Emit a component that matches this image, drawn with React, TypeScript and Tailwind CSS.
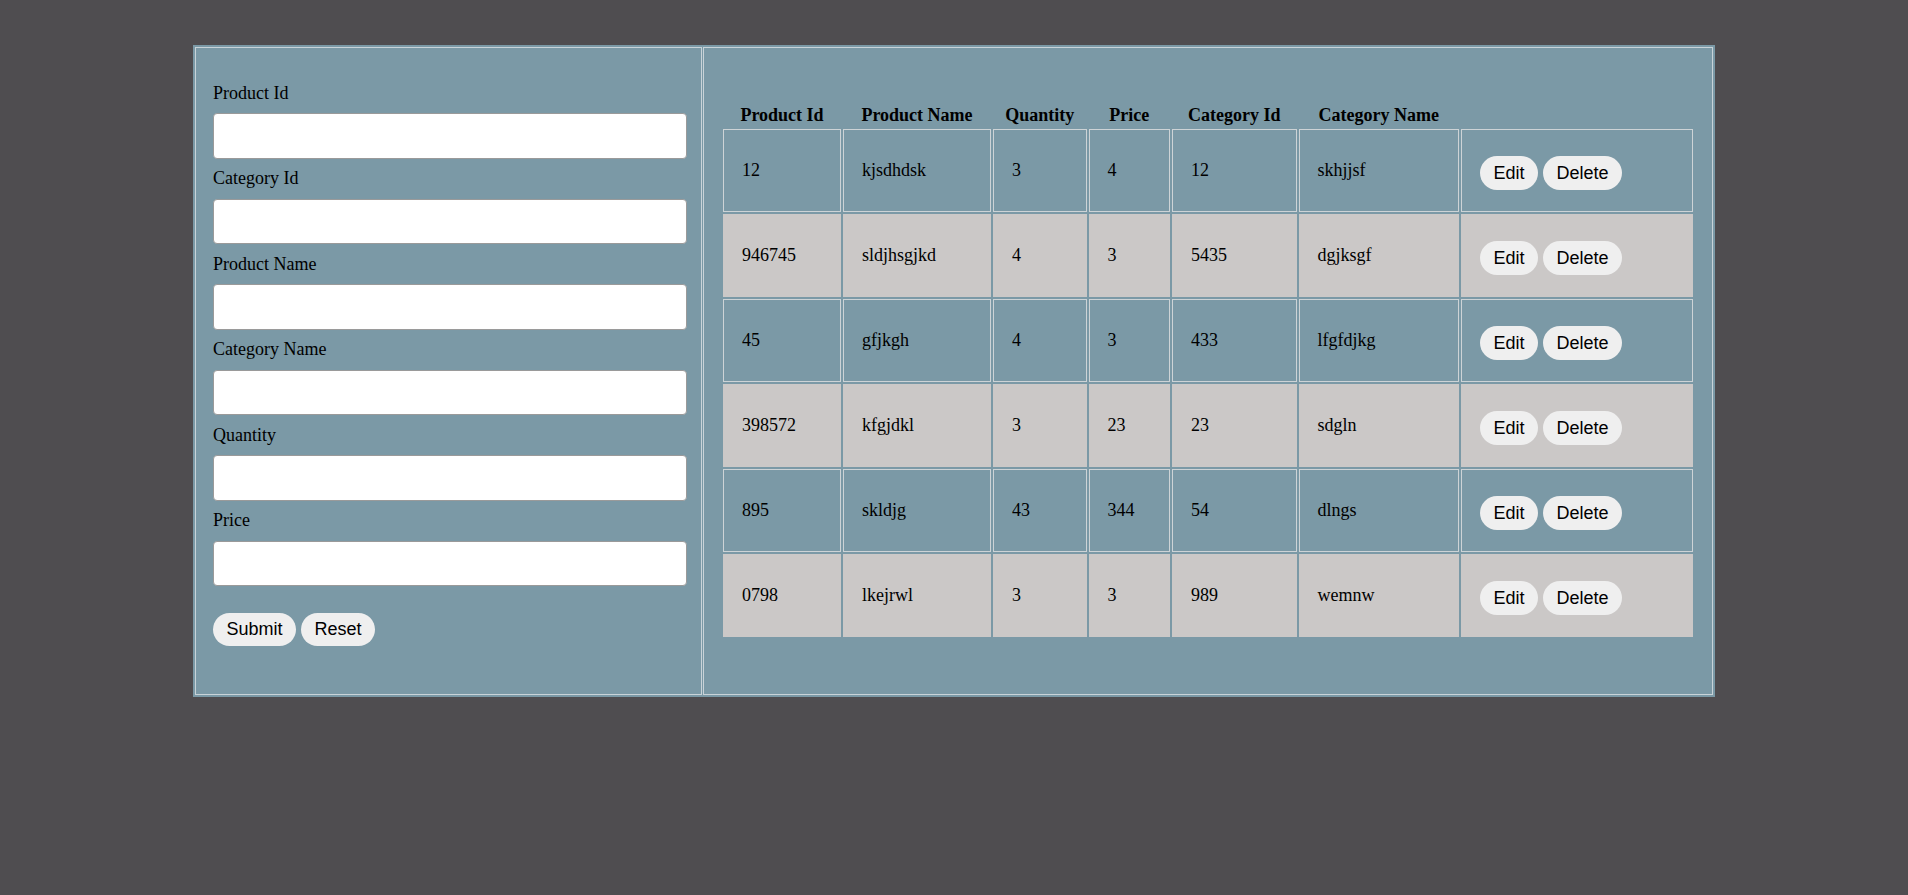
import { useState } from "react";

interface Product {
  productId:    string;
  productName:  string;
  quantity:     string;
  price:        string;
  categoryId:   string;
  categoryName: string;
}

const PRODUCTS: Product[] = [
  { productId: "12",     productName: "kjsdhdsk",   quantity: "3",  price: "4",   categoryId: "12",   categoryName: "skhjjsf" },
  { productId: "946745", productName: "sldjhsgjkd", quantity: "4",  price: "3",   categoryId: "5435", categoryName: "dgjksgf" },
  { productId: "45",     productName: "gfjkgh",     quantity: "4",  price: "3",   categoryId: "433",  categoryName: "lfgfdjkg" },
  { productId: "398572", productName: "kfgjdkl",    quantity: "3",  price: "23",  categoryId: "23",   categoryName: "sdgln" },
  { productId: "895",    productName: "skldjg",     quantity: "43", price: "344", categoryId: "54",   categoryName: "dlngs" },
  { productId: "0798",   productName: "lkejrwl",    quantity: "3",  price: "3",   categoryId: "989",  categoryName: "wemnw" },
];

const FIELDS = ["Product Id", "Category Id", "Product Name", "Category Name", "Quantity", "Price"];

const SERIF = "font-['Liberation_Serif','Times_New_Roman',serif]";
const SANS  = "font-['Liberation_Sans',Arial,sans-serif]";

// ── Form (left panel) ───────────────────────────────────────────────────────

function ProductForm() {
  const [values, setValues] = useState<string[]>(Array(FIELDS.length).fill(""));

  const update = (i: number, v: string) => {
    const next = [...values];
    next[i] = v;
    setValues(next);
  };

  return (
    <div className={`w-[507px] border border-[#c9d3d8] pt-[25px] pl-[17px] pr-[14px] pb-[48.5px] ${SERIF}`}>
      {FIELDS.map((label, i) => (
        <div key={label}>
          <label className="h-[40px] flex items-center text-[18px] text-black">{label}</label>
          <input
            value={values[i]}
            onChange={(e) => update(i, e.target.value)}
            className="block w-full h-[45.5px] bg-white border border-[#9a9a9a] rounded-[4px] px-2 outline-none"
          />
        </div>
      ))}

      <div className={`mt-[26.5px] flex gap-[5px] ${SANS}`}>
        <button className="h-[33px] px-[13.5px] rounded-full bg-[#efefef] text-[18px] leading-none text-black">
          Submit
        </button>
        <button
          onClick={() => setValues(Array(FIELDS.length).fill(""))}
          className="h-[33px] px-[13.5px] rounded-full bg-[#efefef] text-[18px] leading-none text-black"
        >
          Reset
        </button>
      </div>
    </div>
  );
}

// ── Table (right panel) ─────────────────────────────────────────────────────

function ProductTable() {
  return (
    <div className={`flex-1 border border-[#c9d3d8] pt-[54px] pl-[17px] ${SERIF}`}>
      <table className="table-fixed border-separate border-spacing-[2px] w-[974px] text-[18px] leading-[21px] text-black">
        <thead>
          <tr>
            <th className="w-[118px] h-[23px] p-0 font-bold text-center">Product Id</th>
            <th className="w-[148px] h-[23px] p-0 font-bold text-center">Product Name</th>
            <th className="w-[93.5px] h-[23px] p-0 font-bold text-center">Quantity</th>
            <th className="w-[81.5px] h-[23px] p-0 font-bold text-center">Price</th>
            <th className="w-[124.5px] h-[23px] p-0 font-bold text-center">Category Id</th>
            <th className="w-[160.5px] h-[23px] p-0 font-bold text-center">Category Name</th>
            <th className="w-[232px] h-[23px] p-0"></th>
          </tr>
        </thead>
        <tbody>
          {PRODUCTS.map((p, i) => {
            const cell = i % 2 === 0
              ? "h-[83px] border border-[#cdd3d6] pl-[18px] py-0 align-middle"
              : "h-[83px] border border-[#cbc8c7] bg-[#cbc8c7] pl-[18px] py-0 align-middle";
            return (
              <tr key={i}>
                <td className={cell}>{p.productId}</td>
                <td className={cell}>{p.productName}</td>
                <td className={cell}>{p.quantity}</td>
                <td className={cell}>{p.price}</td>
                <td className={cell}>{p.categoryId}</td>
                <td className={cell}>{p.categoryName}</td>
                <td className={cell}>
                  <div className={`flex gap-[5px] pt-[5px] ${SANS}`}>
                    <button className="h-[34px] px-[13.5px] rounded-full bg-[#efefef] text-[18px] leading-none text-black">
                      Edit
                    </button>
                    <button className="h-[34px] px-[13.5px] rounded-full bg-[#efefef] text-[18px] leading-none text-black">
                      Delete
                    </button>
                  </div>
                </td>
              </tr>
            );
          })}
        </tbody>
      </table>
    </div>
  );
}

export default function App() {
  return (
    <div className="min-h-[895px] bg-[#4f4d50] pt-[45px]">
      <div className="mx-auto w-[1522px] bg-[#7b99a6] p-[2px] flex gap-[1px]">
        <ProductForm />
        <ProductTable />
      </div>
    </div>
  );
}
